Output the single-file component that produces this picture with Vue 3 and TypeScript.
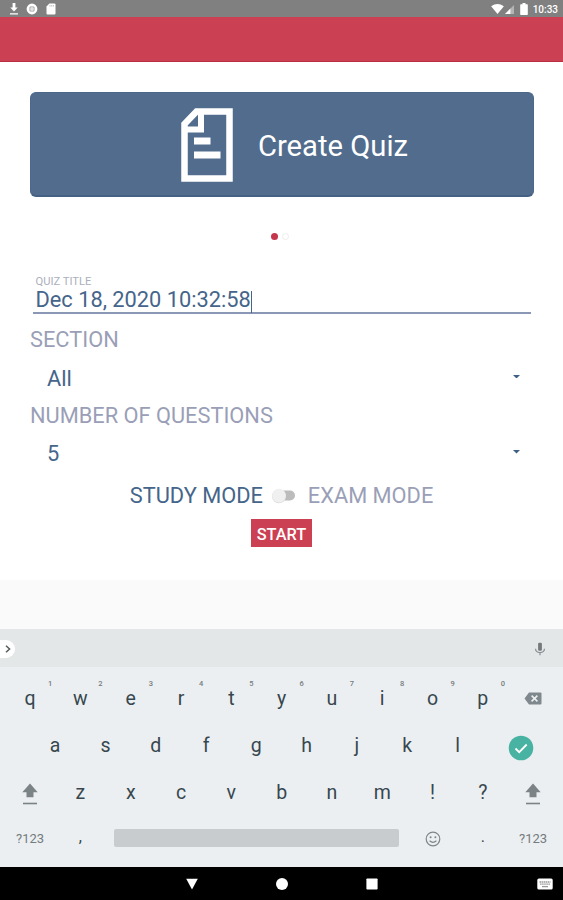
<script setup lang="ts">
import { ref } from 'vue'

interface TopKey {
  label: string
  hint: string
}

const title = ref<string>('Dec 18, 2020 10:32:58')
const examMode = ref<boolean>(false)

const topRow: TopKey[] = [
  { label: 'q', hint: '1' },
  { label: 'w', hint: '2' },
  { label: 'e', hint: '3' },
  { label: 'r', hint: '4' },
  { label: 't', hint: '5' },
  { label: 'y', hint: '6' },
  { label: 'u', hint: '7' },
  { label: 'i', hint: '8' },
  { label: 'o', hint: '9' },
  { label: 'p', hint: '0' },
]
const homeRow: string[] = ['a', 's', 'd', 'f', 'g', 'h', 'j', 'k', 'l']
const bottomRow: string[] = ['z', 'x', 'c', 'v', 'b', 'n', 'm', '!', '?']
</script>

<template>
  <div class="screen">
    <div class="status">
      <div class="status-left">
        <svg class="s-down" viewBox="0 0 10 12"><path d="M3.600 0h2.800v4.600h2.300L5 8.400 1.300 4.600h2.300zM1 10.300h8v1.300H1z" fill="#fff" /></svg>
        <svg class="s-ring" viewBox="0 0 12 12"><circle cx="6" cy="6" r="4.200" fill="#b9b9b9" stroke="#fff" stroke-width="2.400" /><path d="M6 3.400v5.200M3.400 6h5.200" stroke="#eee" stroke-width="1.200" /></svg>
        <svg class="s-sd" viewBox="0 0 10 12"><path d="M3.400.5H8.400Q9.500.5 9.500 1.600V10.400Q9.500 11.500 8.400 11.500H1.600Q.5 11.500.5 10.400V3.500z" fill="#fff" /><path d="M4 2v1.600M5.700 2v1.600M7.400 2v1.600" stroke="#aaa" stroke-width=".7" /></svg>
      </div>
      <div class="status-right">
        <svg class="s-wifi" viewBox="0 0 14 11"><path d="M0 2.600Q7-2.400 14 2.600L7 11z" fill="#fff" /></svg>
        <svg class="s-cell" viewBox="0 0 10 10"><path d="M10 0v10H0z" fill="#b4b4b4" /><path d="M6 4v6H0z" fill="#fff" /></svg>
        <svg class="s-batt" viewBox="0 0 8 12"><path d="M2.500 0h3v1.200h1.700q.6 0 .6.7v9.300q0 .7-.6.7H.8q-.6 0-.6-.7V1.900q0-.7.6-.7h1.700z" fill="#fff" /></svg>
        <span class="clock">10:33</span>
      </div>
    </div>
    <header class="appbar"></header>

    <main class="content">
      <section class="banner">
        <svg class="doc" viewBox="0 0 52 74">
          <path d="M15.500 3.500H48.500V70.500H3.500V16z" fill="none" stroke="#fff" stroke-width="6.500" />
          <path d="M20 4v17.500H3" fill="none" stroke="#fff" stroke-width="6" />
          <path d="M13 33h16.500M13 47h26.500" stroke="#fff" stroke-width="7" />
        </svg>
        <span class="banner-text">Create Quiz</span>
      </section>

      <div class="pager"><i class="dot on"></i><i class="dot"></i></div>

      <div class="field">
        <div class="field-label">QUIZ TITLE</div>
        <div class="field-value">{{ title }}<i class="caret"></i></div>
      </div>

      <div class="label">SECTION</div>
      <div class="select">
        <span>All</span>
        <svg class="arrow" viewBox="0 0 8 4"><path d="M0 0h8L4 4z" fill="#3d6084" /></svg>
      </div>
      <div class="label">NUMBER OF QUESTIONS</div>
      <div class="select">
        <span>5</span>
        <svg class="arrow" viewBox="0 0 8 4"><path d="M0 0h8L4 4z" fill="#3d6084" /></svg>
      </div>

      <div class="modes">
        <span :class="{ active: !examMode }">STUDY MODE</span>
        <svg class="switch" viewBox="0 0 26 16" @click="examMode = !examMode">
          <rect x="5" y="2.500" width="19" height="10" rx="5" fill="#bcbcbc" />
          <circle cx="8" cy="8.200" r="7" fill="#dcdcdc" />
          <circle cx="8" cy="7.600" r="6.800" fill="#f0f0f0" />
        </svg>
        <span :class="{ active: examMode }">EXAM MODE</span>
      </div>
      <div class="start-row"><button class="start">START</button></div>
    </main>

    <div class="gap"></div>

    <div class="suggest">
      <div class="expand"><svg viewBox="0 0 6 8"><path d="M1 .7 4.600 4 1 7.300" fill="none" stroke="#555b5e" stroke-width="1.500" /></svg></div>
      <svg class="mic" viewBox="0 0 12 14"><rect x="4.100" y=".8" width="3.800" height="8" rx="1.200" fill="#74797b" /><path d="M1.500 6.800Q1.800 10.600 6 10.600T10.500 6.800M6 10.600v2.600" fill="none" stroke="#8a8f91" stroke-width="1.200" /></svg>
    </div>

    <div class="keyboard">
      <div class="krow">
        <div v-for="k in topRow" :key="k.label" class="key">{{ k.label }}<sup class="hint">{{ k.hint }}</sup></div>
        <div class="key icon">
          <svg class="back" viewBox="0 0 18 13"><path d="M5 .5h11.500q1 0 1 1v10q0 1-1 1H5L.5 6.500z" fill="#7f888c" /><path d="m7.600 3.600 5.800 5.800m0-5.800L7.600 9.400" stroke="#eceff1" stroke-width="1.600" /></svg>
        </div>
      </div>
      <div class="krow home">
        <div v-for="k in homeRow" :key="k" class="key">{{ k }}</div>
        <div class="key icon enter">
          <svg class="check" viewBox="0 0 26 26"><circle cx="13" cy="13" r="12.300" fill="#48b3a3" /><path d="m7.500 13.500 3.700 3.700 7.500-7.700" fill="none" stroke="#fff" stroke-width="1.800" /></svg>
        </div>
      </div>
      <div class="krow">
        <div class="key icon"><svg class="shift" viewBox="0 0 16 22"><path d="M8 .5 15.700 9.200H11.500V14.300H4.500V9.200H.3z" fill="#7b8387" /><path d="M1 20.500h14" stroke="#7b8387" stroke-width="1.600" /></svg></div>
        <div v-for="k in bottomRow" :key="k" class="key">{{ k }}</div>
        <div class="key icon"><svg class="shift" viewBox="0 0 16 22"><path d="M8 .5 15.700 9.200H11.500V14.300H4.500V9.200H.3z" fill="#7b8387" /><path d="M1 20.500h14" stroke="#7b8387" stroke-width="1.600" /></svg></div>
      </div>
      <div class="krow last">
        <div class="key sym">?123</div>
        <div class="key punct">,</div>
        <div class="space"></div>
        <div class="key icon">
          <svg class="face" viewBox="0 0 16 16"><circle cx="8" cy="8" r="6.800" fill="none" stroke="#7d8588" stroke-width="1.200" /><circle cx="5.600" cy="6.200" r="1" fill="#7d8588" /><circle cx="10.400" cy="6.200" r="1" fill="#7d8588" /><path d="M4.600 9.800Q8 12.800 11.400 9.800" fill="none" stroke="#7d8588" stroke-width="1.200" /></svg>
        </div>
        <div class="key punct">.</div>
        <div class="key sym">?123</div>
      </div>
    </div>

    <nav class="nav">
      <span></span>
      <svg viewBox="0 0 14 14"><path d="M1.200 1.800h11.600L7 12.500z" fill="#fff" /></svg>
      <svg viewBox="0 0 14 14"><circle cx="7" cy="7" r="6" fill="#fff" /></svg>
      <svg viewBox="0 0 14 14"><rect x="1.400" y="1.400" width="11.200" height="11.200" rx=".8" fill="#fff" /></svg>
      <svg class="ime" viewBox="0 0 16 12"><rect x=".3" y=".5" width="15.400" height="11" rx="1.600" fill="#fff" /><path d="M2.500 4h11M3 6.200h10" stroke="#999" stroke-width="1.300" stroke-dasharray="1.600 .5" /><path d="M5 8.600h6" stroke="#999" stroke-width="1.300" /></svg>
    </nav>
  </div>
</template>

<style>
body {
  background: #fafafa;
}
</style>

<style scoped>
.screen {
  width: 563px;
  height: 900px;
  display: flex;
  flex-direction: column;
  overflow: hidden;
  font-family: Roboto, "Liberation Sans", sans-serif;
  background: #fafafa;
}
svg {
  display: block;
  flex: none;
}
.status {
  height: 17px;
  background: #808080;
  display: flex;
  justify-content: space-between;
  padding: 1px 5px 0 9px;
  box-sizing: border-box;
}
.status-left,
.status-right {
  display: flex;
  align-items: center;
}
.s-down { width: 10px; height: 12px; }
.s-ring { width: 12px; height: 12px; margin-left: 7px; }
.s-sd { width: 10px; height: 12px; margin-left: 8px; }
.s-wifi { width: 13px; height: 10px; }
.s-cell { width: 9px; height: 9px; margin-left: 1px; }
.s-batt { width: 8px; height: 12px; margin-left: 6px; }
.clock {
  color: #fff;
  font-size: 10px;
  font-weight: 500;
  line-height: 14px;
  margin-left: 5px;
  padding-top: 1px;
}
.appbar {
  height: 45px;
  box-sizing: border-box;
  background: #cb4052;
  border-bottom: 1px solid #b82e42;
}
.content {
  height: 518px;
  box-sizing: border-box;
  padding: 30px 30px 0;
  background: #fff;
  color: #45658a;
  font-size: 21.800px;
}
.banner {
  height: 105px;
  margin-right: -1px;
  box-sizing: border-box;
  padding-left: 150px;
  display: flex;
  align-items: center;
  background: #516c8d;
  border: 1px solid #4b688b;
  border-bottom: 2px solid #446184;
  border-radius: 6px;
}
.doc { width: 52px; height: 74px; margin-top: 1px; }
.banner-text {
  margin-left: 25px;
  color: #fff;
  font-size: 29.200px;
  line-height: 36px;
  padding-top: 3px;
}
.pager {
  height: 78px;
  display: flex;
  justify-content: center;
  align-items: center;
  gap: 4px;
  padding-right: 4px;
}
.dot {
  width: 7px;
  height: 7px;
  border-radius: 50%;
  box-sizing: border-box;
  border: 1px solid #ededed;
}
.dot.on {
  background: #c5354c;
  border: 0;
}
.field {
  margin: 0 2px 0 3px;
  height: 39px;
  box-sizing: border-box;
  border-bottom: 2px solid #8b98b5;
  padding-left: 2.500px;
}
.field-label {
  font-size: 11.200px;
  line-height: 13px;
  color: #abafbd;
}
.field-value {
  display: flex;
  align-items: center;
  line-height: 24px;
  height: 24px;
}
.caret {
  width: 1px;
  height: 22px;
  margin-top: 3px;
  background: #45658a;
}
.label {
  height: 28px;
  line-height: 28px;
  padding-top: 12px;
  color: #9a9fb7;
}
.select {
  display: flex;
  justify-content: space-between;
  align-items: center;
  height: 35.500px;
  box-sizing: border-box;
  padding: 12.500px 13px 0 17px;
  line-height: 23px;
}
.arrow { width: 7px; height: 3.500px; margin-bottom: 3px; }
.modes {
  height: 26px;
  margin-top: 18px;
  display: flex;
  justify-content: center;
  align-items: center;
  line-height: 26px;
  color: #9a9fb7;
}
.modes .active { color: #45658a; }
.switch { width: 26px; height: 16px; margin: -1px 11px 0 8px; }
.start-row {
  display: flex;
  justify-content: center;
  margin-top: 10px;
}
.start {
  width: 61px;
  height: 28px;
  padding: 2px 0 0;
  border: 0;
  background: #cb4052;
  color: #fff;
  font: 500 16.300px/27px Roboto, "Liberation Sans", sans-serif;
}
.gap {
  height: 49px;
}
.suggest {
  height: 38px;
  background: #e4e7e8;
  display: flex;
  align-items: center;
  justify-content: space-between;
  padding-right: 17px;
}
.expand {
  width: 15px;
  height: 18px;
  box-sizing: border-box;
  padding: 5px 0 0 5px;
  border-radius: 0 9px 9px 0;
  margin-top: 1px;
  background: #fff;
}
.expand svg { width: 6px; height: 8px; }
.mic { width: 12px; height: 14px; margin-top: 2px; }
.keyboard {
  height: 200px;
  box-sizing: border-box;
  background: #eceff1;
  padding: 8px 4px 0 5px;
}
.krow {
  display: grid;
  grid-template-columns: repeat(11, 50.300px);
  height: 46.700px;
}
.krow.home {
  grid-template-columns: repeat(9, 50.300px) 1fr;
  padding-left: 25px;
}
.krow.last {
  grid-template-columns: 50.300px 50.300px 301.800px 50.300px 50.300px 50.300px;
}
.key {
  position: relative;
  display: flex;
  align-items: center;
  justify-content: center;
  box-sizing: border-box;
  padding-top: 2px;
  color: #37474f;
  font-size: 19.500px;
  line-height: 44px;
}
.key.icon { padding-top: 0; }
.hint {
  position: absolute;
  top: 5px;
  right: 3px;
  font-size: 7.500px;
  font-weight: 500;
  line-height: 8px;
  color: #737b7f;
}
.key.sym {
  font-size: 13px;
  color: #737c80;
}
.key.punct {
  padding: 0 0 3px;
  font-size: 16px;
  line-height: 38px;
}
.space {
  align-self: center;
  height: 18px;
  margin: 0 8px;
  border-radius: 2px;
  background: #c8ccce;
}
.back { width: 18px; height: 13px; }
.key.enter { padding: 5px 0 0; }
.check { width: 26px; height: 26px; }
.shift { width: 16px; height: 22px; margin-top: 4px; }
.face { width: 16px; height: 16px; margin-top: 1px; }
.nav {
  height: 33px;
  background: #000;
  display: grid;
  grid-template-columns: 147px 90px 90px 90px 146px;
  align-items: center;
  justify-items: center;
}
.nav svg { width: 14px; height: 14px; }
.nav .ime {
  width: 16px;
  height: 12px;
  justify-self: end;
  margin-right: 10px;
}
</style>
